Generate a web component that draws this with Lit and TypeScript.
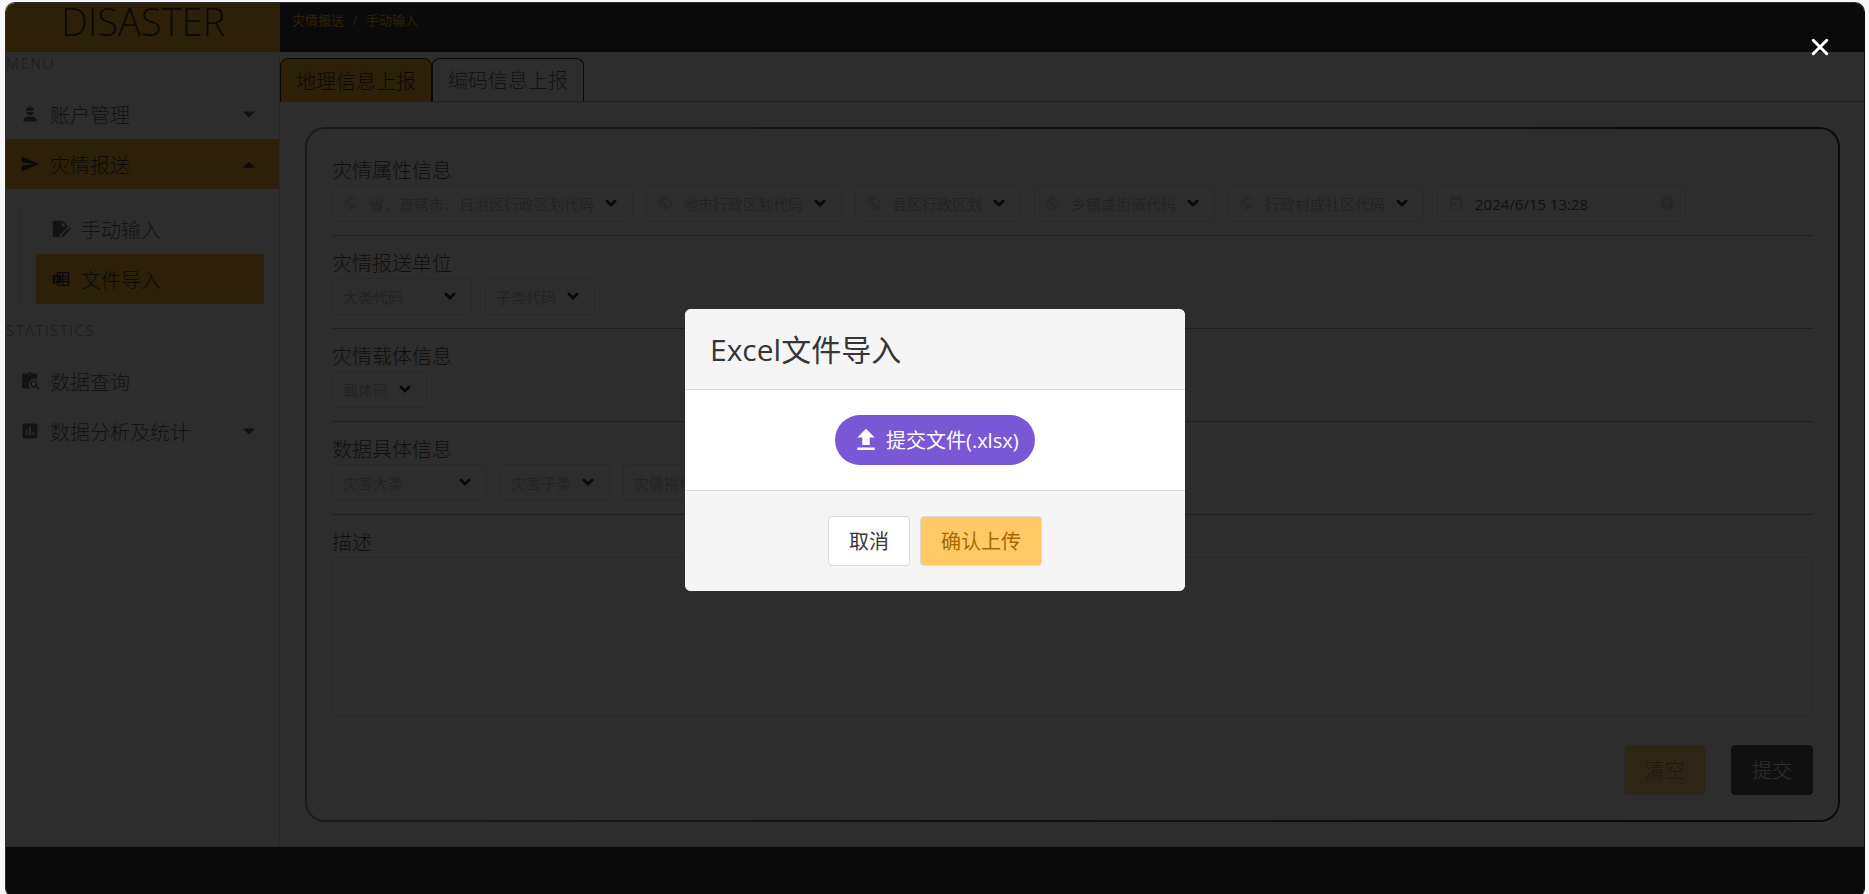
import { LitElement, html, css, svg, nothing } from "lit";
import { customElement, property } from "lit/decorators.js";
import { classMap } from "lit/directives/class-map.js";
import { styleMap } from "lit/directives/style-map.js";

const shapes: Record<string, unknown> = {
  hardHat: svg`<path d="M12,15C7.58,15 4,16.79 4,19V21H20V19C20,16.79 16.42,15 12,15M7.6,9.6A4.4,4.4 0 0,0 12,13.6A4.4,4.4 0 0,0 16.4,9.6M11.5,2C11.2,2 11,2.21 11,2.5V5.5H10V3C10,3 7.75,3.86 7.75,6.75C7.75,6.75 7,6.89 7,8H17C16.95,6.89 16.25,6.75 16.25,6.75C16.25,3.86 14,3 14,3V5.5H13V2.5C13,2.21 12.81,2 12.5,2H11.5Z"/>`,
  send: svg`<path d="M2,21L23,12L2,3V10L17,12L2,14V21Z"/>`,
  fileEdit: svg`<path d="M4,2H14L20,8V9.6L10.5,19.1V22H4A2,2 0 0,1 2,20V4A2,2 0 0,1 4,2M13,3.8V9H18.2Z"/><path d="M20.2,11.6L22.4,13.8L14.6,21.6H12.4V19.4ZM20.9,10.9L21.6,10.2A1,1 0 0,1 23,10.2L23.8,11A1,1 0 0,1 23.8,12.4L23.1,13.1Z"/>`,
  excel: svg`<path d="M8,3.5H21A1,1 0 0,1 22,4.5V19.5A1,1 0 0,1 21,20.5H8A1,1 0 0,1 7,19.5V4.5A1,1 0 0,1 8,3.5ZM8.5,5V8H13.5V5ZM15,5V8H20.5V5ZM8.5,9.5V11H13.5V9.5ZM15,9.5V11H20.5V9.5ZM8.5,12.5V14.5H13.5V12.5ZM15,12.5V14.5H20.5V12.5ZM8.5,16V19H13.5V16ZM15,16V19H20.5V16Z"/><path d="M2,7H12V17H2ZM4.2,9L6,12L4.1,15.2H5.8L7,13L8.3,15.2H10L8,12L9.9,9H8.2L7.1,11L6,9Z"/>`,
  clipboardSearch: svg`<path d="M4.5,3H8.7A3,3 0 0,1 14.3,3H18.5A2,2 0 0,1 20.5,5V10.6A6.2,6.2 0 1,0 13.2,21H4.5A2,2 0 0,1 2.5,19V5A2,2 0 0,1 4.5,3M11.5,3A1,1 0 0,0 11.5,5A1,1 0 0,0 11.5,3"/><path d="M16.5,11A4.5,4.5 0 0,1 20.3,17.9L23.4,21L22,22.4L18.9,19.3A4.5,4.5 0 1,1 16.5,11M16.5,13A2.5,2.5 0 1,0 16.5,18A2.5,2.5 0 0,0 16.5,13"/>`,
  chartBox: svg`<path d="M9,17H7V10H9V17M13,17H11V7H13V17M17,17H15V13H17V17M19,3H5C3.89,3 3,3.89 3,5V19A2,2 0 0,0 5,21H19A2,2 0 0,0 21,19V5C21,3.89 20.1,3 19,3Z"/>`,
  down: svg`<path d="M7,10L12,15L17,10H7Z"/>`,
  up: svg`<path d="M7,15L12,10L17,15H7Z"/>`,
  earth: svg`<path d="M17.9,17.39C17.64,16.59 16.89,16 16,16H15V13A1,1 0 0,0 14,12H8V10H10A1,1 0 0,0 11,9V7H13A2,2 0 0,0 15,5V4.59C17.93,5.77 20,8.64 20,12C20,14.08 19.2,15.97 17.9,17.39M11,19.93C7.05,19.44 4,16.08 4,12C4,11.38 4.08,10.78 4.21,10.21L9,15V16A2,2 0 0,0 11,18M12,2A10,10 0 0,0 2,12A10,10 0 0,0 12,22A10,10 0 0,0 22,12A10,10 0 0,0 12,2Z"/>`,
  calendar: svg`<path d="M7,10H12V15H7M19,19H5V8H19M19,3H18V1H16V3H8V1H6V3H5C3.89,3 3,3.9 3,5V19A2,2 0 0,0 5,21H19A2,2 0 0,0 21,19V5A2,2 0 0,0 19,3Z"/>`,
  clear: svg`<path d="M12,2C17.53,2 22,6.47 22,12C22,17.53 17.53,22 12,22C6.47,22 2,17.53 2,12C2,6.47 6.47,2 12,2M15.59,7L12,10.59L8.41,7L7,8.41L10.59,12L7,15.59L8.41,17L12,13.41L15.59,17L17,15.59L13.41,12L17,8.41L15.59,7Z"/>`,
  upload: svg`<path d="M9,16V10H5L12,3L19,10H15V16H9M5,20V18H19V20H5Z"/>`,
  chevron: svg`<path d="M5,8.5L12,15.5L19,8.5" fill="none" stroke="currentColor" stroke-width="5" stroke-linecap="round"/>`,
  close: svg`<path d="M3,3L21,21M21,3L3,21" fill="none" stroke="currentColor" stroke-width="4" stroke-linecap="round"/>`,
};

@customElement("app-icon")
export class AppIcon extends LitElement {
  @property() name = "";

  static styles = css`
    :host { display: inline-flex; flex: none; width: 20px; height: 20px; }
    .glyph { width: 100%; height: 100%; fill: currentColor; fill-rule: evenodd; overflow: visible; }
  `;

  render() {
    return html`<svg class="glyph" viewBox="0 0 24 24" aria-hidden="true">${shapes[this.name]}</svg>`;
  }
}

interface Field {
  label: string;
  icon?: string;
  minWidth?: number;
}

interface Section {
  title: string;
  fields: Field[];
  date?: string;
}

interface MenuItem {
  label: string;
  icon: string;
  caret?: "up" | "down";
  active?: boolean;
  children?: MenuItem[];
}

const menus: { title: string; items: MenuItem[] }[] = [
  {
    title: "MENU",
    items: [
      { label: "账户管理", icon: "hardHat", caret: "down" },
      {
        label: "灾情报送",
        icon: "send",
        caret: "up",
        active: true,
        children: [
          { label: "手动输入", icon: "fileEdit" },
          { label: "文件导入", icon: "excel", active: true },
        ],
      },
    ],
  },
  {
    title: "STATISTICS",
    items: [
      { label: "数据查询", icon: "clipboardSearch" },
      { label: "数据分析及统计", icon: "chartBox", caret: "down" },
    ],
  },
];

const sections: Section[] = [
  {
    title: "灾情属性信息",
    fields: [
      { label: "省、直辖市、自治区行政区划代码", icon: "earth" },
      { label: "地市行政区划代码", icon: "earth" },
      { label: "县区行政区划", icon: "earth" },
      { label: "乡镇或街道代码", icon: "earth" },
      { label: "行政村或社区代码", icon: "earth" },
    ],
    date: "2024/6/15 13:28",
  },
  { title: "灾情报送单位", fields: [{ label: "大类代码", minWidth: 140 }, { label: "子类代码" }] },
  { title: "灾情载体信息", fields: [{ label: "载体码" }] },
  {
    title: "数据具体信息",
    fields: [{ label: "灾害大类", minWidth: 155 }, { label: "灾害子类" }, { label: "灾情指标" }],
  },
];

@customElement("app-root")
export class AppRoot extends LitElement {
  static styles = css`
    :host {
      display: block;
      height: 100vh;
      overflow: hidden;
      background: #f7f7f7;
      color: #363636;
      font-family: "Open Sans", "Noto Sans CJK SC", sans-serif;
      font-size: 20px;
      font-weight: 300;
      line-height: 30px;
    }
    *, *::before, *::after { box-sizing: border-box; }
    button, select, input, textarea { font: inherit; color: inherit; margin: 0; }
    button { cursor: pointer; }
    a { color: inherit; text-decoration: none; }
    h1, h2, p, ul { margin: 0; padding: 0; font-size: inherit; font-weight: inherit; list-style: none; }

    .frame {
      position: relative;
      display: flex;
      flex-direction: column;
      min-height: calc(100vh + 2px);
      margin: 2px 4px 0 5px;
      border: 1px solid #2d2d2d;
      border-right-color: #090909;
      border-radius: 10px;
      overflow: hidden;
      background: #fff;
    }
    .columns { display: flex; }
    .footer { flex: 1; background: #0a0a0a; }

    .sidebar { flex: none; width: 274px; display: flex; flex-direction: column; }
    .brand {
      height: 49px;
      background: #ffa600;
      color: #0a0a0a;
      font-size: 38px;
      line-height: 36px;
      text-align: center;
    }
    .menu { flex: 1; border-right: 1px solid #d2d2d2; }
    .menu-label {
      padding-bottom: 15px;
      color: #7a7a7a;
      font-size: 15px;
      line-height: 22px;
      letter-spacing: 0.1em;
    }
    .menu-list { padding-bottom: 15px; }
    .menu-link {
      display: flex;
      align-items: center;
      height: 50px;
      padding-left: 14px;
      border-radius: 2px;
      color: #4a4a4a;
    }
    .menu-link.active { background: #ffa600; color: #0a0a0a; }
    .menu-text { flex: 1; padding: 3px 0 0 10px; }
    .caret { width: 30px; height: 30px; margin-right: 15px; }
    .submenu { margin: 15px 15px 0 14px; padding-left: 15px; border-left: 1px solid #d2d2d2; }
    .submenu .menu-link { padding-left: 15px; }

    .main { flex: 1; min-width: 0; }
    .navbar { height: 49px; padding: 7px 12px; background: #0a0a0a; }
    .crumbs { display: flex; font-size: 13px; font-weight: 400; line-height: 20px; color: #ffa600; }
    .slash { width: 22px; text-align: center; color: #b5b5b5; }

    .tabs { display: flex; margin-top: 6px; border-bottom: 1px solid #a0a0a0; }
    .tab {
      height: 43px;
      padding: 2px 15px 0;
      border: 1px solid #0a0a0a;
      border-bottom: 0;
      border-radius: 8px 8px 0 0;
      background: none;
      color: #4a4a4a;
    }
    .tab.active { height: 44px; margin-bottom: -1px; background: #ffa600; color: #0a0a0a; }

    .card {
      margin: 25px 24px 25px 25px;
      padding: 26px 25px 25px;
      border: 2px solid transparent;
      border-radius: 20px;
      background:
        linear-gradient(#fff, #fff) padding-box,
        linear-gradient(90deg, #848484, #0a0a0a) border-box;
    }
    .section { padding-bottom: 13px; margin-bottom: 12px; border-bottom: 1px solid #a0a0a0; }
    .title { display: block; padding-top: 2px; line-height: 28px; }
    .fields { display: flex; gap: 13px; height: 37px; font-size: 15px; }
    .control { position: relative; display: flex; flex: none; }
    .select {
      appearance: none;
      height: 37px;
      padding: 0 37px 0 10px;
      border: 1px solid #dbdbdb;
      border-radius: 4px;
      background: #fff;
      color: #b4b4b4;
      font-weight: 400;
    }
    .select.with-icon { padding-left: 36px; }
    .lead, .trail, .arrow { position: absolute; top: 10px; width: 16px; height: 16px; color: #d4d4d4; }
    .lead { left: 11px; }
    .trail { right: 11px; }
    .arrow { right: 15px; color: #0a0a0a; pointer-events: none; width: 14px; }
    .date {
      width: 249px;
      height: 37px;
      padding-left: 37px;
      border: 1px solid #dbdbdb;
      border-radius: 4px;
      background: #fff;
      font-weight: 400;
    }
    .textarea {
      display: block;
      width: 100%;
      height: 160px;
      padding: 10px;
      border: 1px solid #dbdbdb;
      border-radius: 4px;
      background: #fff;
      resize: none;
      font-size: 15px;
    }
    .actions { display: flex; justify-content: flex-end; gap: 25px; margin-top: 28px; }
    .button {
      height: 50px;
      padding: 2px 20px 0;
      border: 1px solid #dbdbdb;
      border-radius: 4px;
      background: #fff;
      color: #363636;
      white-space: nowrap;
    }
    .button.warning { background: #ffc966; color: #a66900; }
    .button.dark { background: #363636; border-color: #363636; color: #fff; }

    .overlay {
      position: absolute;
      inset: 0;
      display: flex;
      align-items: center;
      justify-content: center;
      background: rgba(10, 10, 10, 0.86);
    }
    .close {
      position: absolute;
      top: 28px;
      right: 28px;
      display: flex;
      align-items: center;
      justify-content: center;
      width: 32px;
      height: 32px;
      padding: 0;
      border: 0;
      background: none;
      color: #fff;
    }
    .cross { width: 18px; height: 18px; }
    .modal { width: 500px; border-radius: 6px; overflow: hidden; background: #fff; }
    .modal-head, .modal-foot { padding: 25px; background: #f5f5f5; }
    .modal-head { border-bottom: 1px solid #dbdbdb; }
    .modal-title { padding-top: 2px; font-size: 30px; line-height: 28px; font-weight: 400; }
    .modal-body { display: flex; justify-content: center; padding: 25px; }
    .modal-foot { display: flex; justify-content: center; gap: 10px; border-top: 1px solid #dbdbdb; }
    .modal-foot .button, .upload { font-weight: 400; }
    .upload {
      display: flex;
      align-items: center;
      gap: 5px;
      min-width: 200px;
      height: 50px;
      padding: 0 16px;
      border: 0;
      border-radius: 25px;
      background: #7957d5;
      color: #fff;
    }
    .upload-icon { width: 30px; height: 30px; }
    .upload-text { padding-top: 2px; }
  `;

  private menuItem(item: MenuItem): unknown {
    return html`<li>
      <a class=${classMap({ "menu-link": true, active: !!item.active })} href="#">
        <app-icon name=${item.icon}></app-icon>
        <span class="menu-text">${item.label}</span>
        ${item.caret ? html`<app-icon class="caret" name=${item.caret}></app-icon>` : nothing}
      </a>
      ${item.children
        ? html`<ul class="submenu">${item.children.map((child) => this.menuItem(child))}</ul>`
        : nothing}
    </li>`;
  }

  private field(field: Field) {
    const width = field.minWidth ? { minWidth: `${field.minWidth}px` } : {};
    return html`<div class="control">
      <select
        class=${classMap({ select: true, "with-icon": !!field.icon })}
        style=${styleMap(width)}
        aria-label=${field.label}
      >
        <option>${field.label}</option>
      </select>
      ${field.icon ? html`<app-icon class="lead" name=${field.icon}></app-icon>` : nothing}
      <app-icon class="arrow" name="chevron"></app-icon>
    </div>`;
  }

  private section(section: Section) {
    return html`<section class="section">
      <h2 class="title">${section.title}</h2>
      <div class="fields">
        ${section.fields.map((field) => this.field(field))}
        ${section.date
          ? html`<div class="control">
              <input class="date" type="text" aria-label="时间" .value=${section.date} />
              <app-icon class="lead" name="calendar"></app-icon>
              <app-icon class="trail" name="clear"></app-icon>
            </div>`
          : nothing}
      </div>
    </section>`;
  }

  render() {
    return html`
      <div class="frame">
        <div class="columns">
          <aside class="sidebar">
            <h1 class="brand">DISASTER</h1>
            <nav class="menu">
              ${menus.map(
                (menu) => html`
                  <p class="menu-label">${menu.title}</p>
                  <ul class="menu-list">${menu.items.map((item) => this.menuItem(item))}</ul>
                `
              )}
            </nav>
          </aside>
          <main class="main">
            <header class="navbar">
              <nav class="crumbs">
                <a href="#">灾情报送</a><span class="slash">/</span><a href="#">手动输入</a>
              </nav>
            </header>
            <div class="tabs" role="tablist">
              <button class="tab active" role="tab" aria-selected="true">地理信息上报</button>
              <button class="tab" role="tab" aria-selected="false">编码信息上报</button>
            </div>
            <form class="card">
              ${sections.map((section) => this.section(section))}
              <label class="title" for="description">描述</label>
              <textarea class="textarea" id="description"></textarea>
              <div class="actions">
                <button class="button warning" type="reset">清空</button>
                <button class="button dark" type="button">提交</button>
              </div>
            </form>
          </main>
        </div>
        <footer class="footer"></footer>
        <div class="overlay">
          <section class="modal" role="dialog" aria-modal="true" aria-labelledby="modal-title">
            <header class="modal-head">
              <h2 class="modal-title" id="modal-title">Excel文件导入</h2>
            </header>
            <div class="modal-body">
              <button class="upload" type="button">
                <app-icon class="upload-icon" name="upload"></app-icon>
                <span class="upload-text">提交文件(.xlsx)</span>
              </button>
            </div>
            <footer class="modal-foot">
              <button class="button" type="button">取消</button>
              <button class="button warning" type="button">确认上传</button>
            </footer>
          </section>
          <button class="close" type="button" aria-label="关闭">
            <app-icon class="cross" name="close"></app-icon>
          </button>
        </div>
      </div>
    `;
  }
}
